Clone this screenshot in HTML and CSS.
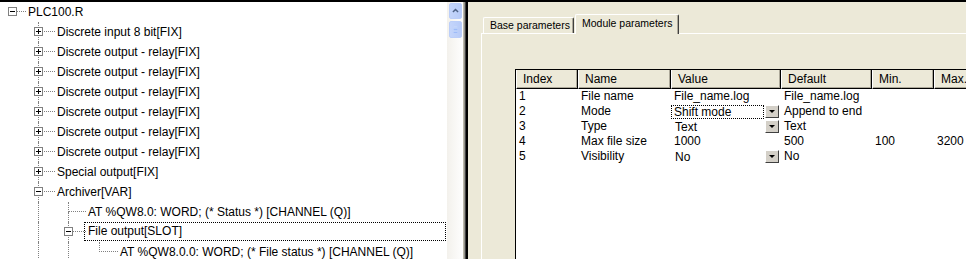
FILE: index.html
```html
<!DOCTYPE html>
<html>
<head>
	<title>PLC configuration</title>
	<link rel="stylesheet" href="styles.css">
</head>
<body>
	<div class="app">
		<div class="tree-pane">
			<div class="row">
				<span class="lv l0 root"><i class="up"></i><b class="box"></b></span>
				<span class="txt">PLC100.R</span>
			</div>
			<div class="row">
				<span class="lv l0"></span>
				<span class="lv l1 tee"><i class="up"></i><i class="dn"></i><b class="box plus"></b></span>
				<span class="txt">Discrete input 8 bit[FIX]</span>
			</div>
			<div class="row">
				<span class="lv l0"></span>
				<span class="lv l1 tee"><i class="up"></i><i class="dn"></i><b class="box plus"></b></span>
				<span class="txt">Discrete output - relay[FIX]</span>
			</div>
			<div class="row">
				<span class="lv l0"></span>
				<span class="lv l1 tee"><i class="up"></i><i class="dn"></i><b class="box plus"></b></span>
				<span class="txt">Discrete output - relay[FIX]</span>
			</div>
			<div class="row">
				<span class="lv l0"></span>
				<span class="lv l1 tee"><i class="up"></i><i class="dn"></i><b class="box plus"></b></span>
				<span class="txt">Discrete output - relay[FIX]</span>
			</div>
			<div class="row">
				<span class="lv l0"></span>
				<span class="lv l1 tee"><i class="up"></i><i class="dn"></i><b class="box plus"></b></span>
				<span class="txt">Discrete output - relay[FIX]</span>
			</div>
			<div class="row">
				<span class="lv l0"></span>
				<span class="lv l1 tee"><i class="up"></i><i class="dn"></i><b class="box plus"></b></span>
				<span class="txt">Discrete output - relay[FIX]</span>
			</div>
			<div class="row">
				<span class="lv l0"></span>
				<span class="lv l1 tee"><i class="up"></i><i class="dn"></i><b class="box plus"></b></span>
				<span class="txt">Discrete output - relay[FIX]</span>
			</div>
			<div class="row">
				<span class="lv l0"></span>
				<span class="lv l1 tee"><i class="up"></i><i class="dn"></i><b class="box plus"></b></span>
				<span class="txt">Special output[FIX]</span>
			</div>
			<div class="row">
				<span class="lv l0"></span>
				<span class="lv l1 tee"><i class="up"></i><i class="dn"></i><b class="box"></b></span>
				<span class="txt">Archiver[VAR]</span>
			</div>
			<div class="row">
				<span class="lv l0"></span>
				<span class="lv l1 pipe"><i class="v"></i></span>
				<span class="lv l2 tee"><i class="up"></i><i class="dn"></i></span>
				<span class="txt">AT %QW8.0: WORD; (* Status *) [CHANNEL (Q)]</span>
			</div>
			<div class="row focus">
				<span class="lv l0"></span>
				<span class="lv l1 pipe"><i class="v"></i></span>
				<span class="lv l2 tee"><i class="up"></i><i class="dn"></i><b class="box"></b></span>
				<span class="txt">File output[SLOT]</span>
			</div>
			<div class="row">
				<span class="lv l0"></span>
				<span class="lv l1 pipe"><i class="v"></i></span>
				<span class="lv l2 pipe"><i class="v"></i></span>
				<span class="lv l3 ell"><i class="up"></i></span>
				<span class="txt">AT %QW8.0.0: WORD; (* File status *) [CHANNEL (Q)]</span>
			</div>
		</div>

		<div class="vscroll">
			<div class="sb-btn">
				<svg width="15" height="14" viewBox="0 0 15 14"><path d="M4 8.5 L7.5 5 L11 8.5" fill="none" stroke="#4d6185" stroke-width="2"/></svg>
			</div>
			<div class="sb-thumb">
				<svg width="15" height="15" viewBox="0 0 15 15"><path d="M5 4.5h5M5 6.5h5M5 8.5h5M5 10.5h5" stroke="#eef4fe" stroke-width="1"/><path d="M5 5.5h5M5 7.5h5M5 9.5h5M5 11.5h5" stroke="#8cb0f8" stroke-width="1"/></svg>
			</div>
		</div>
		<div class="splitter"></div>

		<div class="props">
			<div class="tabs">
				<div class="tab">Base parameters</div>
				<div class="tab active">Module parameters</div>
			</div>
			<div class="page">
				<div class="grid">
					<div class="grid-row head">
						<span class="c-index">Index</span>
						<span class="c-name">Name</span>
						<span class="c-value">Value</span>
						<span class="c-def">Default</span>
						<span class="c-min">Min.</span>
						<span class="c-max">Max.</span>
					</div>
					<div class="grid-row">
						<span class="c-index">1</span>
						<span class="c-name">File name</span>
						<span class="c-value">File_name.log</span>
						<span class="c-def">File_name.log</span>
						<span class="c-min"></span>
						<span class="c-max"></span>
					</div>
					<div class="grid-row">
						<span class="c-index">2</span>
						<span class="c-name">Mode</span>
						<span class="c-value combo"><span class="edit focused">Shift mode</span><b class="drop"></b></span>
						<span class="c-def">Append to end</span>
						<span class="c-min"></span>
						<span class="c-max"></span>
					</div>
					<div class="grid-row">
						<span class="c-index">3</span>
						<span class="c-name">Type</span>
						<span class="c-value combo"><span class="edit">Text</span><b class="drop"></b></span>
						<span class="c-def">Text</span>
						<span class="c-min"></span>
						<span class="c-max"></span>
					</div>
					<div class="grid-row">
						<span class="c-index">4</span>
						<span class="c-name">Max file size</span>
						<span class="c-value">1000</span>
						<span class="c-def">500</span>
						<span class="c-min">100</span>
						<span class="c-max">3200</span>
					</div>
					<div class="grid-row">
						<span class="c-index">5</span>
						<span class="c-name">Visibility</span>
						<span class="c-value combo"><span class="edit">No</span><b class="drop"></b></span>
						<span class="c-def">No</span>
						<span class="c-min"></span>
						<span class="c-max"></span>
					</div>
				</div>
			</div>
		</div>
	</div>
</body>
</html>
```

FILE: styles.css
```css
body {
	margin: 0;
	padding: 0;
	font-family: "Liberation Sans", Arial, sans-serif;
	font-size: 12px;
	color: #000;
	overflow: hidden;
}
.app {
	display: flex;
	height: 259px;
	box-sizing: border-box;
	border-top: 2px solid #000;
	overflow: hidden;
}

/* tree */
.tree-pane {
	width: 447px;
	flex: none;
	background: #fff;
	overflow: hidden;
}
.row {
	display: flex;
	height: 20px;
	white-space: nowrap;
}
.lv {
	position: relative;
	flex: none;
	height: 20px;
	display: grid;
	grid-template-columns: var(--c) 1fr;
	grid-template-rows: 10px 10px;
}
.l0 { width: 27px; --c: 12px; }
.l1 { width: 29px; --c: 11px; }
.l2 { width: 31px; --c: 12px; }
.l3 { width: 32px; --c: 12px; }
.lv .up {
	grid-column: 2;
	grid-row: 1;
	border-left: 1px dotted #808080;
	border-bottom: 1px dotted #808080;
	margin-right: 1px;
}
.lv.root .up {
	border-left: none;
	margin-left: 1px;
}
.lv .dn {
	grid-column: 2;
	grid-row: 2;
	border-left: 1px dotted #808080;
}
.lv .v {
	grid-column: 2;
	grid-row: 1 / 3;
	border-left: 1px dotted #808080;
}
.box {
	position: absolute;
	left: calc(var(--c) - 4px);
	top: 5px;
	width: 9px;
	height: 9px;
	box-sizing: border-box;
	border: 1px solid #808080;
	background: #fff;
}
.box::before {
	content: "";
	position: absolute;
	left: 1px;
	top: 3px;
	width: 5px;
	height: 1px;
	background: #000;
}
.box.plus::after {
	content: "";
	position: absolute;
	left: 3px;
	top: 1px;
	width: 1px;
	height: 5px;
	background: #000;
}
.txt {
	line-height: 20px;
	padding-left: 1px;
}
.row.focus .txt {
	flex: 1;
	line-height: 17px;
	border: 1px dotted #000;
	margin: 0 1px 1px -3px;
	padding-left: 3px;
}

/* scrollbar and splitter */
.vscroll {
	width: 16px;
	flex: none;
	background: linear-gradient(to right, #f3f1ec, #fefefe);
	padding-top: 1px;
	box-sizing: border-box;
}
.sb-btn, .sb-thumb {
	margin: 0 1px 2px 2px;
	height: 14px;
	border: 1px solid #bbcef9;
	border-radius: 2px;
	background: linear-gradient(to right, #c4d5fb, #b7cbf8);
	display: flex;
	align-items: center;
	justify-content: center;
}
.sb-thumb {
	height: 15px;
}
.splitter {
	width: 6px;
	flex: none;
	background: linear-gradient(to right, #d0cdc0 0, #a8a595 1px, #808080 2px, #000 3px, #000 5px, #ece9d8 5px);
}

/* property pages */
.props {
	flex: 1;
	background: #ece9d8;
	padding-left: 12px;
	display: flex;
	flex-direction: column;
	min-width: 0;
}
.tabs {
	display: flex;
	align-items: flex-end;
	height: 19px;
	margin-top: 12px;
	padding-left: 2px;
	font-size: 10.5px;
	position: relative;
	z-index: 1;
}
.tab {
	height: 16px;
	line-height: 15px;
	box-sizing: border-box;
	padding: 0 3px 0 6px;
	border-left: 1px solid #fff;
	border-top: 1px solid #fff;
	border-right: 1px solid #404040;
	border-radius: 2px 2px 0 0;
	box-shadow: inset -1px 0 #aca899;
}
.tab.active {
	height: 20px;
	line-height: 17px;
	margin-bottom: -1px;
	margin-left: 1px;
	padding: 0 6px 0 6px;
	background: #ece9d8;
}
.page {
	flex: 1;
	border-left: 1px solid #fff;
	border-top: 1px solid #fff;
	padding: 35px 0 0 33px;
	min-height: 0;
}

/* parameter grid */
.grid {
	width: 520px;
	height: 100%;
	background: #fff;
	border-left: 1px solid #000;
	border-top: 1px solid #000;
}
.grid-row {
	display: flex;
	height: 15px;
	line-height: 15px;
	white-space: nowrap;
}
.grid-row > span {
	flex: none;
	box-sizing: border-box;
	padding-left: 3px;
}
.c-index { width: 62px; }
.c-name { width: 93px; }
.c-value { width: 110px; }
.c-def { width: 91px; }
.c-min { width: 62px; }
.c-max { width: 102px; }
.grid-row.head {
	height: 19px;
	line-height: 18px;
	background: #ece9d8;
}
.grid-row.head > span {
	padding-left: 6px;
	border-left: 1px solid #fff;
	border-right: 1px solid #000;
	border-bottom: 1px solid #000;
	box-shadow: inset -1px -1px #aca899;
}
.combo {
	display: flex;
	align-items: center;
}
.combo .edit {
	flex: 1;
	height: 14px;
	line-height: 13px;
	box-sizing: border-box;
	border: 1px solid transparent;
}
.combo .edit.focused {
	border: 1px dotted #000;
	margin-left: -3px;
	padding-left: 2px;
}
.drop {
	width: 14px;
	height: 13px;
	margin: 0 2px 0 1px;
	box-sizing: border-box;
	background: #d4d0c8;
	border: 1px solid;
	border-color: #fff #404040 #404040 #fff;
	display: flex;
	align-items: center;
	justify-content: center;
}
.drop::before {
	content: "";
	width: 0;
	height: 0;
	border-left: 3px solid transparent;
	border-right: 3px solid transparent;
	border-top: 3px solid #000;
}
```
